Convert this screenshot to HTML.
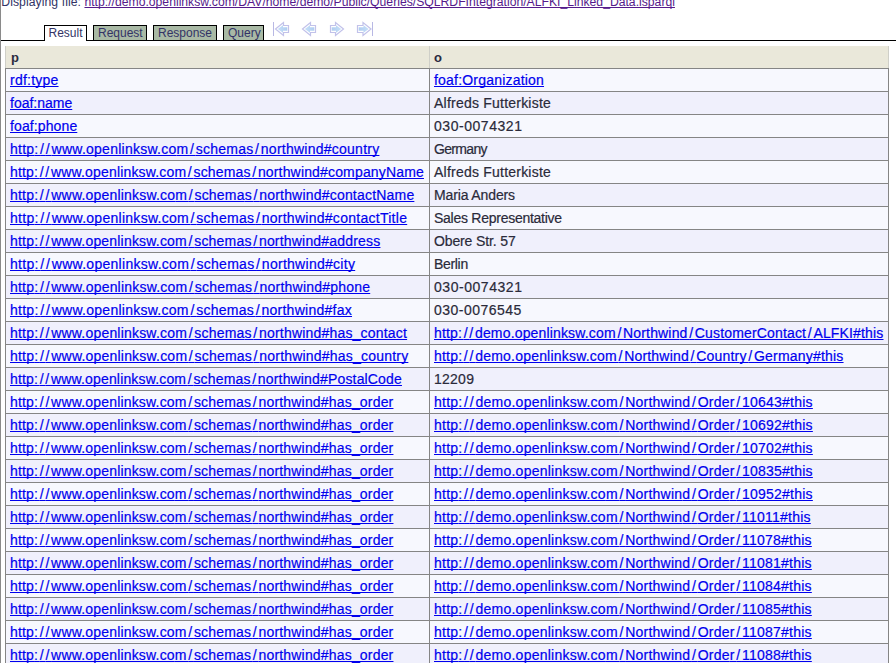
<!DOCTYPE html>
<html><head><meta charset="utf-8"><style>
html,body{margin:0;padding:0;background:#fff;width:896px;height:663px;overflow:hidden;position:relative}
body{font-family:"Liberation Sans",sans-serif}
#vl{position:absolute;left:0;top:0;width:1px;height:663px;background:#8a8a8a}
#disp{position:absolute;left:1px;top:-5px;font-size:12.2px;color:#333366;white-space:nowrap;line-height:14px}
#disp a{color:#551a8b;text-decoration:underline;text-decoration-skip-ink:none}
#hl{position:absolute;left:1px;top:40px;width:895px;height:1px;background:#000}
.tab{position:absolute;top:25px;height:15px;border:1px solid #000;border-bottom:none;box-sizing:border-box;background:#a9b9a5;font-size:12px;color:#333366;line-height:14px;white-space:nowrap}
.tab span{position:absolute;top:0px}
#t1{background:#fff;height:16px}
.row,.hdr{position:absolute;left:5px;width:884px;height:23px;box-sizing:border-box}
.hdr{top:46px;background:#eae8da}
.hdr i{position:absolute;top:0;width:1px;height:22px;background:#cfcfc8}
.hdr b{position:absolute;top:4px;font-size:13px;color:#2b2b40;line-height:16px}
.row{height:24px}
.row::before{content:"";position:absolute;left:0;top:-1px;width:884px;height:24px;box-sizing:border-box;border:1px solid #858585}
.row::after{content:"";position:absolute;left:424px;top:-1px;width:1px;height:24px;background:#858585}
.r1{background:#f7f8fe}
.r2{background:#f0f0fc}
.row a,.row span{position:absolute;top:2px;padding-left:5px;font-size:14px;line-height:18px;white-space:nowrap;-webkit-text-stroke:0.2px currentColor}
.row i{font-style:normal}
.row a{color:#0000ee;text-decoration:underline;text-decoration-skip-ink:none}
.row span{color:#2a2a3a}
.ic{position:absolute}
</style></head><body>
<div id="vl"></div>
<div id="disp"><span style="letter-spacing:0.07px;padding-left:0.3px">Displaying file: </span><a>http://demo.openlinksw.com/DAV/home/demo/Public/Queries/SQLRDFIntegration/ALFKI_Linked_Data.isparql</a></div>
<div id="hl"></div>
<div class="tab" id="t1" style="left:44px;width:43px"><span style="left:3.5px">Result</span></div>
<div class="tab" style="left:93px;width:54px"><span style="left:4px">Request</span></div>
<div class="tab" style="left:153px;width:64px"><span style="left:4px">Response</span></div>
<div class="tab" style="left:223px;width:41px"><span style="left:4px">Query</span></div>
<svg class="ic" style="left:270px;top:19px" width="110" height="20" viewBox="270 19 110 20">
<defs><linearGradient id="gl" x1="0" x2="1" y1="0" y2="0"><stop offset="0" stop-color="#c6e0f9"/><stop offset="1" stop-color="#b0cdf0"/></linearGradient>
<linearGradient id="gr" x1="1" x2="0" y1="0" y2="0"><stop offset="0" stop-color="#c6e0f9"/><stop offset="1" stop-color="#b0cdf0"/></linearGradient></defs>
<g stroke="#c2c2ea" stroke-width="1.2" fill="#fff">
<rect x="273" y="22" width="1" height="14" fill="#b8b8e4" stroke="none"/>
<path d="M275.5,29 L283.5,22.5 L283.5,25.5 L288.5,25.5 L288.5,32.5 L283.5,32.5 L283.5,35.5 Z"/>
<path d="M302.5,29 L310.5,22.5 L310.5,25.5 L315.5,25.5 L315.5,32.5 L310.5,32.5 L310.5,35.5 Z"/>
<path d="M343.5,29 L335.5,22.5 L335.5,25.5 L330.5,25.5 L330.5,32.5 L335.5,32.5 L335.5,35.5 Z"/>
<path d="M371,29 L363,22.5 L363,25.5 L357.5,25.5 L357.5,32.5 L363,32.5 L363,35.5 Z"/>
<rect x="372" y="22" width="1" height="14" fill="#b8b8e4" stroke="none"/>
</g>
<g fill="url(#gl)">
<path d="M277.8,29 L283,25.2 L283,27.3 L287.3,27.3 L287.3,30.7 L283,30.7 L283,32.8 Z"/>
<path d="M304.8,29 L310,25.2 L310,27.3 L314.3,27.3 L314.3,30.7 L310,30.7 L310,32.8 Z"/>
</g>
<g fill="url(#gr)">
<path d="M341.2,29 L336,25.2 L336,27.3 L331.7,27.3 L331.7,30.7 L336,30.7 L336,32.8 Z"/>
<path d="M368.7,29 L363.5,25.2 L363.5,27.3 L358.7,27.3 L358.7,30.7 L363.5,30.7 L363.5,32.8 Z"/>
</g>
</svg>
<div class="hdr"><i style="left:0"></i><i style="left:424px"></i><i style="left:883px"></i><b style="left:6px">p</b><b style="left:429px">o</b></div>
<div class="row r1" style="top:69px"><a style="left:0px;letter-spacing:0.229px">rdf:type</a><a style="left:424px;letter-spacing:0.200px">foaf:Organization</a></div><div class="row r2" style="top:92px"><a style="left:0px">foaf:name</a><span style="left:424px;letter-spacing:0.222px">Alfreds Futterkiste</span></div><div class="row r1" style="top:115px"><a style="left:0px;letter-spacing:0.111px">foaf:phone</a><span style="left:424px;letter-spacing:0.540px">030-0074321</span></div><div class="row r2" style="top:138px"><a style="left:0px;letter-spacing:0.248px">http<i style="letter-spacing:1.848px">:</i><i style="letter-spacing:1.848px">/</i><i style="letter-spacing:1.848px">/</i>www.openlinksw.co<i style="letter-spacing:1.848px">m</i><i style="letter-spacing:1.848px">/</i>schema<i style="letter-spacing:1.848px">s</i><i style="letter-spacing:1.848px">/</i>northwind#country</a><span style="left:424px;letter-spacing:-0.667px">Germany</span></div><div class="row r1" style="top:161px"><a style="left:0px;letter-spacing:0.163px">http<i style="letter-spacing:1.763px">:</i><i style="letter-spacing:1.763px">/</i><i style="letter-spacing:1.763px">/</i>www.openlinksw.co<i style="letter-spacing:1.763px">m</i><i style="letter-spacing:1.763px">/</i>schema<i style="letter-spacing:1.763px">s</i><i style="letter-spacing:1.763px">/</i>northwind#companyName</a><span style="left:424px;letter-spacing:0.222px">Alfreds Futterkiste</span></div><div class="row r2" style="top:184px"><a style="left:0px;letter-spacing:0.200px">http<i style="letter-spacing:1.800px">:</i><i style="letter-spacing:1.800px">/</i><i style="letter-spacing:1.800px">/</i>www.openlinksw.co<i style="letter-spacing:1.800px">m</i><i style="letter-spacing:1.800px">/</i>schema<i style="letter-spacing:1.800px">s</i><i style="letter-spacing:1.800px">/</i>northwind#contactName</a><span style="left:424px;letter-spacing:-0.127px">Maria Anders</span></div><div class="row r1" style="top:207px"><a style="left:0px;letter-spacing:0.273px">http<i style="letter-spacing:1.873px">:</i><i style="letter-spacing:1.873px">/</i><i style="letter-spacing:1.873px">/</i>www.openlinksw.co<i style="letter-spacing:1.873px">m</i><i style="letter-spacing:1.873px">/</i>schema<i style="letter-spacing:1.873px">s</i><i style="letter-spacing:1.873px">/</i>northwind#contactTitle</a><span style="left:424px;letter-spacing:-0.263px">Sales Representative</span></div><div class="row r2" style="top:230px"><a style="left:0px;letter-spacing:0.192px">http<i style="letter-spacing:1.792px">:</i><i style="letter-spacing:1.792px">/</i><i style="letter-spacing:1.792px">/</i>www.openlinksw.co<i style="letter-spacing:1.792px">m</i><i style="letter-spacing:1.792px">/</i>schema<i style="letter-spacing:1.792px">s</i><i style="letter-spacing:1.792px">/</i>northwind#address</a><span style="left:424px;letter-spacing:-0.133px">Obere Str. 57</span></div><div class="row r1" style="top:253px"><a style="left:0px;letter-spacing:0.277px">http<i style="letter-spacing:1.877px">:</i><i style="letter-spacing:1.877px">/</i><i style="letter-spacing:1.877px">/</i>www.openlinksw.co<i style="letter-spacing:1.877px">m</i><i style="letter-spacing:1.877px">/</i>schema<i style="letter-spacing:1.877px">s</i><i style="letter-spacing:1.877px">/</i>northwind#city</a><span style="left:424px;letter-spacing:-0.320px">Berlin</span></div><div class="row r2" style="top:276px"><a style="left:0px;letter-spacing:0.213px">http<i style="letter-spacing:1.813px">:</i><i style="letter-spacing:1.813px">/</i><i style="letter-spacing:1.813px">/</i>www.openlinksw.co<i style="letter-spacing:1.813px">m</i><i style="letter-spacing:1.813px">/</i>schema<i style="letter-spacing:1.813px">s</i><i style="letter-spacing:1.813px">/</i>northwind#phone</a><span style="left:424px;letter-spacing:0.540px">030-0074321</span></div><div class="row r1" style="top:299px"><a style="left:0px;letter-spacing:0.265px">http<i style="letter-spacing:1.865px">:</i><i style="letter-spacing:1.865px">/</i><i style="letter-spacing:1.865px">/</i>www.openlinksw.co<i style="letter-spacing:1.865px">m</i><i style="letter-spacing:1.865px">/</i>schema<i style="letter-spacing:1.865px">s</i><i style="letter-spacing:1.865px">/</i>northwind#fax</a><span style="left:424px;letter-spacing:0.480px">030-0076545</span></div><div class="row r2" style="top:322px"><a style="left:0px;letter-spacing:0.196px">http<i style="letter-spacing:1.796px">:</i><i style="letter-spacing:1.796px">/</i><i style="letter-spacing:1.796px">/</i>www.openlinksw.co<i style="letter-spacing:1.796px">m</i><i style="letter-spacing:1.796px">/</i>schema<i style="letter-spacing:1.796px">s</i><i style="letter-spacing:1.796px">/</i>northwind#has_contact</a><a style="left:424px;letter-spacing:0.161px">http<i style="letter-spacing:1.761px">:</i><i style="letter-spacing:1.761px">/</i><i style="letter-spacing:1.761px">/</i>demo.openlinksw.co<i style="letter-spacing:1.761px">m</i><i style="letter-spacing:1.761px">/</i>Northwin<i style="letter-spacing:1.761px">d</i><i style="letter-spacing:1.761px">/</i>CustomerContac<i style="letter-spacing:1.761px">t</i><i style="letter-spacing:1.761px">/</i>ALFKI#this</a></div><div class="row r1" style="top:345px"><a style="left:0px;letter-spacing:0.204px">http<i style="letter-spacing:1.804px">:</i><i style="letter-spacing:1.804px">/</i><i style="letter-spacing:1.804px">/</i>www.openlinksw.co<i style="letter-spacing:1.804px">m</i><i style="letter-spacing:1.804px">/</i>schema<i style="letter-spacing:1.804px">s</i><i style="letter-spacing:1.804px">/</i>northwind#has_country</a><a style="left:424px;letter-spacing:0.200px">http<i style="letter-spacing:1.800px">:</i><i style="letter-spacing:1.800px">/</i><i style="letter-spacing:1.800px">/</i>demo.openlinksw.co<i style="letter-spacing:1.800px">m</i><i style="letter-spacing:1.800px">/</i>Northwin<i style="letter-spacing:1.800px">d</i><i style="letter-spacing:1.800px">/</i>Countr<i style="letter-spacing:1.800px">y</i><i style="letter-spacing:1.800px">/</i>Germany#this</a></div><div class="row r2" style="top:368px"><a style="left:0px;letter-spacing:0.162px">http<i style="letter-spacing:1.762px">:</i><i style="letter-spacing:1.762px">/</i><i style="letter-spacing:1.762px">/</i>www.openlinksw.co<i style="letter-spacing:1.762px">m</i><i style="letter-spacing:1.762px">/</i>schema<i style="letter-spacing:1.762px">s</i><i style="letter-spacing:1.762px">/</i>northwind#PostalCode</a><span style="left:424px;letter-spacing:0.250px">12209</span></div><div class="row r1" style="top:391px"><a style="left:0px;letter-spacing:0.181px">http<i style="letter-spacing:1.781px">:</i><i style="letter-spacing:1.781px">/</i><i style="letter-spacing:1.781px">/</i>www.openlinksw.co<i style="letter-spacing:1.781px">m</i><i style="letter-spacing:1.781px">/</i>schema<i style="letter-spacing:1.781px">s</i><i style="letter-spacing:1.781px">/</i>northwind#has_order</a><a style="left:424px;letter-spacing:0.238px">http<i style="letter-spacing:1.838px">:</i><i style="letter-spacing:1.838px">/</i><i style="letter-spacing:1.838px">/</i>demo.openlinksw.co<i style="letter-spacing:1.838px">m</i><i style="letter-spacing:1.838px">/</i>Northwin<i style="letter-spacing:1.838px">d</i><i style="letter-spacing:1.838px">/</i>Orde<i style="letter-spacing:1.838px">r</i><i style="letter-spacing:1.838px">/</i>10643#this</a></div><div class="row r2" style="top:414px"><a style="left:0px;letter-spacing:0.181px">http<i style="letter-spacing:1.781px">:</i><i style="letter-spacing:1.781px">/</i><i style="letter-spacing:1.781px">/</i>www.openlinksw.co<i style="letter-spacing:1.781px">m</i><i style="letter-spacing:1.781px">/</i>schema<i style="letter-spacing:1.781px">s</i><i style="letter-spacing:1.781px">/</i>northwind#has_order</a><a style="left:424px;letter-spacing:0.238px">http<i style="letter-spacing:1.838px">:</i><i style="letter-spacing:1.838px">/</i><i style="letter-spacing:1.838px">/</i>demo.openlinksw.co<i style="letter-spacing:1.838px">m</i><i style="letter-spacing:1.838px">/</i>Northwin<i style="letter-spacing:1.838px">d</i><i style="letter-spacing:1.838px">/</i>Orde<i style="letter-spacing:1.838px">r</i><i style="letter-spacing:1.838px">/</i>10692#this</a></div><div class="row r1" style="top:437px"><a style="left:0px;letter-spacing:0.181px">http<i style="letter-spacing:1.781px">:</i><i style="letter-spacing:1.781px">/</i><i style="letter-spacing:1.781px">/</i>www.openlinksw.co<i style="letter-spacing:1.781px">m</i><i style="letter-spacing:1.781px">/</i>schema<i style="letter-spacing:1.781px">s</i><i style="letter-spacing:1.781px">/</i>northwind#has_order</a><a style="left:424px;letter-spacing:0.238px">http<i style="letter-spacing:1.838px">:</i><i style="letter-spacing:1.838px">/</i><i style="letter-spacing:1.838px">/</i>demo.openlinksw.co<i style="letter-spacing:1.838px">m</i><i style="letter-spacing:1.838px">/</i>Northwin<i style="letter-spacing:1.838px">d</i><i style="letter-spacing:1.838px">/</i>Orde<i style="letter-spacing:1.838px">r</i><i style="letter-spacing:1.838px">/</i>10702#this</a></div><div class="row r2" style="top:460px"><a style="left:0px;letter-spacing:0.181px">http<i style="letter-spacing:1.781px">:</i><i style="letter-spacing:1.781px">/</i><i style="letter-spacing:1.781px">/</i>www.openlinksw.co<i style="letter-spacing:1.781px">m</i><i style="letter-spacing:1.781px">/</i>schema<i style="letter-spacing:1.781px">s</i><i style="letter-spacing:1.781px">/</i>northwind#has_order</a><a style="left:424px;letter-spacing:0.238px">http<i style="letter-spacing:1.838px">:</i><i style="letter-spacing:1.838px">/</i><i style="letter-spacing:1.838px">/</i>demo.openlinksw.co<i style="letter-spacing:1.838px">m</i><i style="letter-spacing:1.838px">/</i>Northwin<i style="letter-spacing:1.838px">d</i><i style="letter-spacing:1.838px">/</i>Orde<i style="letter-spacing:1.838px">r</i><i style="letter-spacing:1.838px">/</i>10835#this</a></div><div class="row r1" style="top:483px"><a style="left:0px;letter-spacing:0.181px">http<i style="letter-spacing:1.781px">:</i><i style="letter-spacing:1.781px">/</i><i style="letter-spacing:1.781px">/</i>www.openlinksw.co<i style="letter-spacing:1.781px">m</i><i style="letter-spacing:1.781px">/</i>schema<i style="letter-spacing:1.781px">s</i><i style="letter-spacing:1.781px">/</i>northwind#has_order</a><a style="left:424px;letter-spacing:0.238px">http<i style="letter-spacing:1.838px">:</i><i style="letter-spacing:1.838px">/</i><i style="letter-spacing:1.838px">/</i>demo.openlinksw.co<i style="letter-spacing:1.838px">m</i><i style="letter-spacing:1.838px">/</i>Northwin<i style="letter-spacing:1.838px">d</i><i style="letter-spacing:1.838px">/</i>Orde<i style="letter-spacing:1.838px">r</i><i style="letter-spacing:1.838px">/</i>10952#this</a></div><div class="row r2" style="top:506px"><a style="left:0px;letter-spacing:0.181px">http<i style="letter-spacing:1.781px">:</i><i style="letter-spacing:1.781px">/</i><i style="letter-spacing:1.781px">/</i>www.openlinksw.co<i style="letter-spacing:1.781px">m</i><i style="letter-spacing:1.781px">/</i>schema<i style="letter-spacing:1.781px">s</i><i style="letter-spacing:1.781px">/</i>northwind#has_order</a><a style="left:424px;letter-spacing:0.238px">http<i style="letter-spacing:1.838px">:</i><i style="letter-spacing:1.838px">/</i><i style="letter-spacing:1.838px">/</i>demo.openlinksw.co<i style="letter-spacing:1.838px">m</i><i style="letter-spacing:1.838px">/</i>Northwin<i style="letter-spacing:1.838px">d</i><i style="letter-spacing:1.838px">/</i>Orde<i style="letter-spacing:1.838px">r</i><i style="letter-spacing:1.838px">/</i>11011#this</a></div><div class="row r1" style="top:529px"><a style="left:0px;letter-spacing:0.181px">http<i style="letter-spacing:1.781px">:</i><i style="letter-spacing:1.781px">/</i><i style="letter-spacing:1.781px">/</i>www.openlinksw.co<i style="letter-spacing:1.781px">m</i><i style="letter-spacing:1.781px">/</i>schema<i style="letter-spacing:1.781px">s</i><i style="letter-spacing:1.781px">/</i>northwind#has_order</a><a style="left:424px;letter-spacing:0.238px">http<i style="letter-spacing:1.838px">:</i><i style="letter-spacing:1.838px">/</i><i style="letter-spacing:1.838px">/</i>demo.openlinksw.co<i style="letter-spacing:1.838px">m</i><i style="letter-spacing:1.838px">/</i>Northwin<i style="letter-spacing:1.838px">d</i><i style="letter-spacing:1.838px">/</i>Orde<i style="letter-spacing:1.838px">r</i><i style="letter-spacing:1.838px">/</i>11078#this</a></div><div class="row r2" style="top:552px"><a style="left:0px;letter-spacing:0.181px">http<i style="letter-spacing:1.781px">:</i><i style="letter-spacing:1.781px">/</i><i style="letter-spacing:1.781px">/</i>www.openlinksw.co<i style="letter-spacing:1.781px">m</i><i style="letter-spacing:1.781px">/</i>schema<i style="letter-spacing:1.781px">s</i><i style="letter-spacing:1.781px">/</i>northwind#has_order</a><a style="left:424px;letter-spacing:0.238px">http<i style="letter-spacing:1.838px">:</i><i style="letter-spacing:1.838px">/</i><i style="letter-spacing:1.838px">/</i>demo.openlinksw.co<i style="letter-spacing:1.838px">m</i><i style="letter-spacing:1.838px">/</i>Northwin<i style="letter-spacing:1.838px">d</i><i style="letter-spacing:1.838px">/</i>Orde<i style="letter-spacing:1.838px">r</i><i style="letter-spacing:1.838px">/</i>11081#this</a></div><div class="row r1" style="top:575px"><a style="left:0px;letter-spacing:0.181px">http<i style="letter-spacing:1.781px">:</i><i style="letter-spacing:1.781px">/</i><i style="letter-spacing:1.781px">/</i>www.openlinksw.co<i style="letter-spacing:1.781px">m</i><i style="letter-spacing:1.781px">/</i>schema<i style="letter-spacing:1.781px">s</i><i style="letter-spacing:1.781px">/</i>northwind#has_order</a><a style="left:424px;letter-spacing:0.238px">http<i style="letter-spacing:1.838px">:</i><i style="letter-spacing:1.838px">/</i><i style="letter-spacing:1.838px">/</i>demo.openlinksw.co<i style="letter-spacing:1.838px">m</i><i style="letter-spacing:1.838px">/</i>Northwin<i style="letter-spacing:1.838px">d</i><i style="letter-spacing:1.838px">/</i>Orde<i style="letter-spacing:1.838px">r</i><i style="letter-spacing:1.838px">/</i>11084#this</a></div><div class="row r2" style="top:598px"><a style="left:0px;letter-spacing:0.181px">http<i style="letter-spacing:1.781px">:</i><i style="letter-spacing:1.781px">/</i><i style="letter-spacing:1.781px">/</i>www.openlinksw.co<i style="letter-spacing:1.781px">m</i><i style="letter-spacing:1.781px">/</i>schema<i style="letter-spacing:1.781px">s</i><i style="letter-spacing:1.781px">/</i>northwind#has_order</a><a style="left:424px;letter-spacing:0.238px">http<i style="letter-spacing:1.838px">:</i><i style="letter-spacing:1.838px">/</i><i style="letter-spacing:1.838px">/</i>demo.openlinksw.co<i style="letter-spacing:1.838px">m</i><i style="letter-spacing:1.838px">/</i>Northwin<i style="letter-spacing:1.838px">d</i><i style="letter-spacing:1.838px">/</i>Orde<i style="letter-spacing:1.838px">r</i><i style="letter-spacing:1.838px">/</i>11085#this</a></div><div class="row r1" style="top:621px"><a style="left:0px;letter-spacing:0.181px">http<i style="letter-spacing:1.781px">:</i><i style="letter-spacing:1.781px">/</i><i style="letter-spacing:1.781px">/</i>www.openlinksw.co<i style="letter-spacing:1.781px">m</i><i style="letter-spacing:1.781px">/</i>schema<i style="letter-spacing:1.781px">s</i><i style="letter-spacing:1.781px">/</i>northwind#has_order</a><a style="left:424px;letter-spacing:0.238px">http<i style="letter-spacing:1.838px">:</i><i style="letter-spacing:1.838px">/</i><i style="letter-spacing:1.838px">/</i>demo.openlinksw.co<i style="letter-spacing:1.838px">m</i><i style="letter-spacing:1.838px">/</i>Northwin<i style="letter-spacing:1.838px">d</i><i style="letter-spacing:1.838px">/</i>Orde<i style="letter-spacing:1.838px">r</i><i style="letter-spacing:1.838px">/</i>11087#this</a></div><div class="row r2" style="top:644px"><a style="left:0px;letter-spacing:0.181px">http<i style="letter-spacing:1.781px">:</i><i style="letter-spacing:1.781px">/</i><i style="letter-spacing:1.781px">/</i>www.openlinksw.co<i style="letter-spacing:1.781px">m</i><i style="letter-spacing:1.781px">/</i>schema<i style="letter-spacing:1.781px">s</i><i style="letter-spacing:1.781px">/</i>northwind#has_order</a><a style="left:424px;letter-spacing:0.238px">http<i style="letter-spacing:1.838px">:</i><i style="letter-spacing:1.838px">/</i><i style="letter-spacing:1.838px">/</i>demo.openlinksw.co<i style="letter-spacing:1.838px">m</i><i style="letter-spacing:1.838px">/</i>Northwin<i style="letter-spacing:1.838px">d</i><i style="letter-spacing:1.838px">/</i>Orde<i style="letter-spacing:1.838px">r</i><i style="letter-spacing:1.838px">/</i>11088#this</a></div>
</body></html>
